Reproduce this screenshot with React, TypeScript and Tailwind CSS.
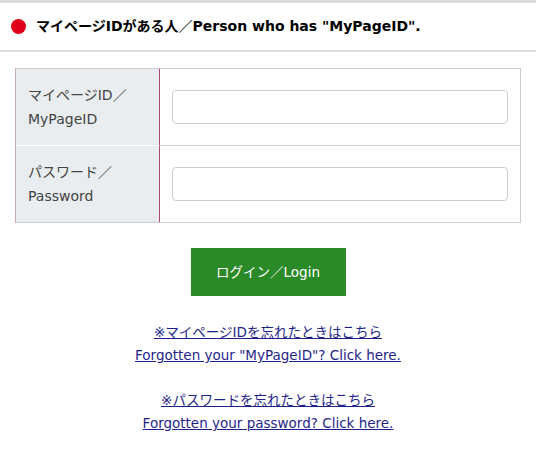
export default function App() {
  const font = { fontFamily: '"DejaVu Sans", "Noto Sans CJK JP", sans-serif' };
  return (
    <div className="w-[536px] h-[450px] bg-white text-[#333]" style={font}>
      <div className="h-[52px] border-t-[3px] border-b-2 border-[#dcdcdc] flex items-center pl-[11px] gap-[10px]">
        <span className="w-[15px] h-[15px] rounded-full bg-[#e1001c] shrink-0" />
        <h2 className="text-[14px] font-bold text-black">
          マイページIDがある人／Person who has "MyPageID".
        </h2>
      </div>

      <div className="mt-4 mx-[15px] border border-[#cccccc] border-l-[#c8a8b8]">
        <div className="flex border-b border-[#cccccc]">
          <div className="w-[144px] shrink-0 bg-[#e9edf0] border-r border-r-[#b0467a] flex flex-col justify-center pl-[12px] text-[14px] leading-[24px] text-[#444] border-b border-b-white -mb-px">
            <span>マイページID／</span>
            <span>MyPageID</span>
          </div>
          <div className="flex-1 h-[76px] flex items-center px-[12px]">
            <input className="w-full h-[34px] rounded-[4px] border border-[#cccccc] bg-white outline-none" />
          </div>
        </div>
        <div className="flex">
          <div className="w-[144px] shrink-0 bg-[#e9edf0] border-r border-r-[#b0467a] flex flex-col justify-center pl-[12px] text-[14px] leading-[24px] text-[#444]">
            <span>パスワード／</span>
            <span>Password</span>
          </div>
          <div className="flex-1 h-[76px] flex items-center px-[12px]">
            <input type="password" className="w-full h-[34px] rounded-[4px] border border-[#cccccc] bg-white outline-none" />
          </div>
        </div>
      </div>

      <div className="flex justify-center mt-[25px]">
        <button className="w-[155px] h-[48px] bg-[#2a8a27] text-white text-[13.5px]">
          ログイン／Login
        </button>
      </div>

      <div className="mt-[25px] flex flex-col items-center text-[13.5px] leading-[23px] text-[#1f1f8a]">
        <a href="#" className="underline">※マイページIDを忘れたときはこちら</a>
        <a href="#" className="underline">Forgotten your "MyPageID"? Click here.</a>
        <a href="#" className="underline mt-[22px]">※パスワードを忘れたときはこちら</a>
        <a href="#" className="underline">Forgotten your password? Click here.</a>
      </div>
    </div>
  );
}
